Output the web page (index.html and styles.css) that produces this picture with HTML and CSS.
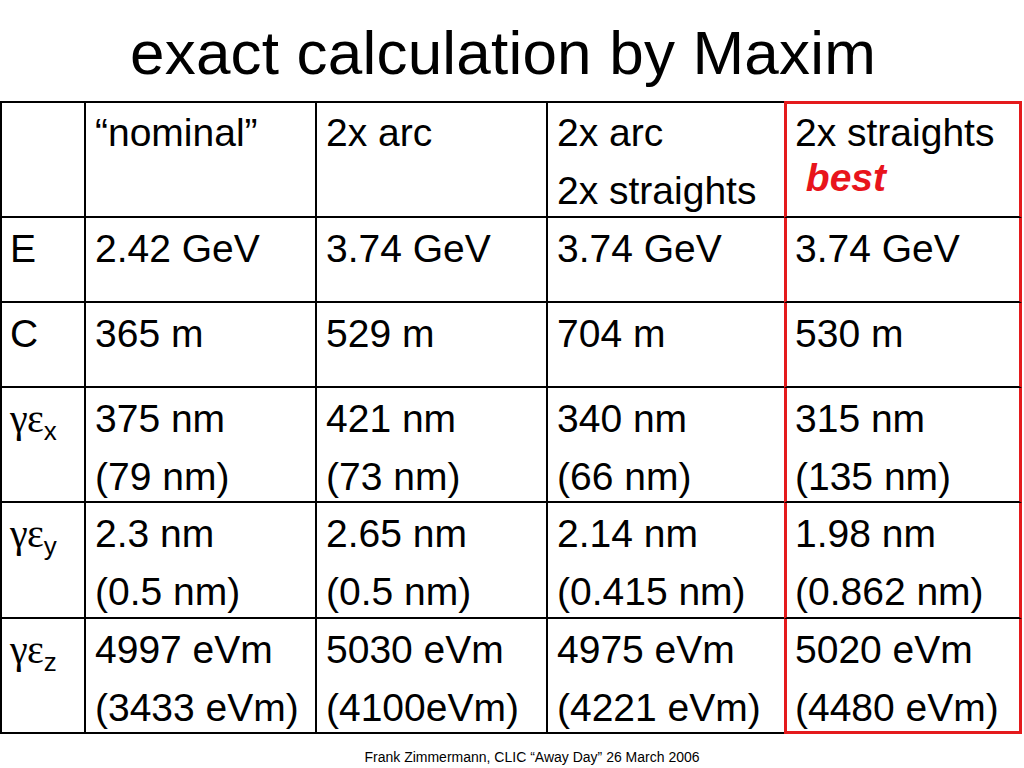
FILE: index.html
```html
<!DOCTYPE html>
<html>
<head>
<meta charset="utf-8">
<link rel="stylesheet" href="styles.css">
</head>
<body>
<div class="slide">
  <h1 class="title">exact calculation by Maxim</h1>
  <div class="grid">
    <div class="cell first top"></div>
    <div class="cell top">“nominal”</div>
    <div class="cell top">2x arc</div>
    <div class="cell top pre-best">2x arc<br>2x straights</div>
    <div class="cell top best-col best-top">2x straights<span class="best">&nbsp;best</span></div>

    <div class="cell first">E</div>
    <div class="cell">2.42 GeV</div>
    <div class="cell">3.74 GeV</div>
    <div class="cell pre-best">3.74 GeV</div>
    <div class="cell best-col">3.74 GeV</div>

    <div class="cell first">C</div>
    <div class="cell">365 m</div>
    <div class="cell">529 m</div>
    <div class="cell pre-best">704 m</div>
    <div class="cell best-col">530 m</div>

    <div class="cell first"><span class="greek">γε</span><span class="sub">x</span></div>
    <div class="cell">375 nm<br>(79 nm)</div>
    <div class="cell">421 nm<br>(73 nm)</div>
    <div class="cell pre-best">340 nm<br>(66 nm)</div>
    <div class="cell best-col">315 nm<br>(135 nm)</div>

    <div class="cell first"><span class="greek">γε</span><span class="sub">y</span></div>
    <div class="cell">2.3 nm<br>(0.5 nm)</div>
    <div class="cell">2.65 nm<br>(0.5 nm)</div>
    <div class="cell pre-best">2.14 nm<br>(0.415 nm)</div>
    <div class="cell best-col">1.98 nm<br>(0.862 nm)</div>

    <div class="cell first"><span class="greek">γε</span><span class="sub">z</span></div>
    <div class="cell">4997 eVm<br>(3433 eVm)</div>
    <div class="cell">5030 eVm<br>(4100eVm)</div>
    <div class="cell pre-best">4975 eVm<br>(4221 eVm)</div>
    <div class="cell best-col best-bottom">5020 eVm<br>(4480 eVm)</div>
  </div>
  <div class="footer">Frank Zimmermann, CLIC “Away Day” 26 March 2006</div>
</div>
</body>
</html>
```
FILE: styles.css
```css
html, body {
  margin: 0;
  padding: 0;
  background: #ffffff;
}

.slide {
  width: 1024px;
  height: 768px;
  position: relative;
  overflow: hidden;
  font-family: "Liberation Sans", Arial, sans-serif;
  color: #000;
}

.title {
  margin: 0;
  box-sizing: border-box;
  height: 101px;
  padding: 22px 0 0 130px;
  font-weight: normal;
  font-size: 62px;
  line-height: 62px;
  letter-spacing: 0.2px;
  white-space: nowrap;
}

.grid {
  display: grid;
  grid-template-columns: 86px 231px 231px 236px 238px;
  grid-template-rows: 117px 85px 85px 115px 116px 115px;
  font-size: 39px;
  line-height: 58px;
}

.cell {
  box-sizing: border-box;
  border-right: 2px solid #000;
  border-bottom: 2px solid #000;
  padding: 2px 0 0 9px;
  white-space: nowrap;
  overflow: visible;
  min-width: 0;
  min-height: 0;
}

.cell.first { border-left: 2px solid #000; padding-left: 8px; }
.cell.top { border-top: 2px solid #000; padding-top: 1px; }
.cell.pre-best { border-right: none; }

.cell.best-col {
  border-left: 3px solid #e41a1c;
  border-right: 3px solid #e41a1c;
  padding-left: 8px;
}
.cell.best-top { border-top: 3px solid #e41a1c; padding-top: 0; }
.cell.best-bottom { border-bottom: 3px solid #e41a1c; }

.best {
  display: block;
  line-height: 31px;
  color: #e8141c;
  font-weight: bold;
  font-style: italic;
}

.greek {
  font-family: "Liberation Serif", "DejaVu Serif", serif;
  font-size: 40px;
}

.sub {
  font-size: 26px;
  position: relative;
  top: 8px;
}

.footer {
  position: absolute;
  left: 0;
  right: 0;
  top: 748px;
  text-align: center;
  padding-left: 40px;
  font-size: 14px;
  line-height: 18px;
}
```
